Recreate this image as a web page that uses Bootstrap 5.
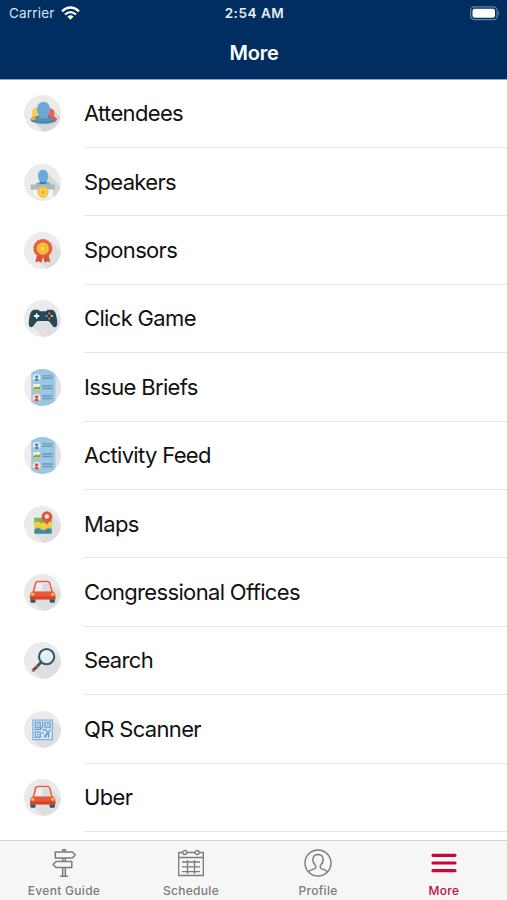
<!DOCTYPE html>
<html lang="en">
<head>
<meta charset="utf-8">
<meta name="viewport" content="width=device-width, initial-scale=1">
<title>More</title>
<link href="https://cdn.jsdelivr.net/npm/bootstrap@5.3.0/dist/css/bootstrap.min.css" rel="stylesheet">
<style>
body{font-family:Inter,"Liberation Sans",sans-serif;color:#111;background:#fff}
.app{height:900px;overflow:hidden}
.top{height:79px;background:#002e61;box-shadow:0 1px 0 #8fa5c0;z-index:1}
.status{height:27px;padding:0 7px 0 9px;font-size:13px;line-height:27px}
.status .carrier{font-size:13.5px;letter-spacing:.18px;color:#dce4ed}
.status .wifi{margin-left:6px}
.status .clock{font-size:13.5px;font-weight:600;letter-spacing:.55px;color:#e7edf4}
.title{font-size:20px;line-height:24px;font-weight:600;margin:14px 0 0;padding-left:1px;letter-spacing:-.2px}
.menu-list{padding-top:.6px}
.menu-row{height:68.4px;padding-left:24px;color:#111}
.menu-row svg{width:37px;height:37px;margin-right:23px;flex:none}
.menu-row .label{border-bottom:1px solid #e6e6e7;font-size:22px;letter-spacing:-.66px;padding-top:1px}
.tabs{height:60px;background:#f6f6f6;border-top:1px solid #d3d3d3;z-index:1}
.tab-item{color:#7b7b7b;font-size:12px;line-height:15px;font-weight:500;letter-spacing:.3px;padding:7px 0 0 1px}
.tab-item svg{width:30px;height:30px;margin-bottom:5px}
.tab-item.current{color:#c6093b;padding-left:0}
</style>
<script src="https://cdn.jsdelivr.net/npm/bootstrap@5.3.0/dist/js/bootstrap.bundle.min.js"></script>
</head>
<body>
<svg width="0" height="0" class="position-absolute" aria-hidden="true">
<defs>
<clipPath id="disc"><circle cx="18" cy="18" r="18"/></clipPath>
<linearGradient id="shade" x1="0" y1="0" x2="1" y2="1"><stop offset="0" stop-color="#ccc"/><stop offset="1" stop-color="#dedede"/></linearGradient>
</defs>
<symbol id="attendees" viewBox="0 0 36 36"><g clip-path="url(#disc)"><path fill="#ebebeb" d="M0 0h36v36H0z"/><path fill="url(#shade)" d="M29 15l8 8v14H20l-9-10z"/>
<path fill="#f5cf4d" d="M7.500 24c-1-2 .3-3 .5-5-1-4 1-6.500 4-6.500s4.500 2 4.500 5v7z"/><path fill="#e8644f" d="M22 24v-8c1-4 7.500-4 7.500 1 0 2-.5 3 .5 5l2 2z"/>
<ellipse cx="19" cy="24" rx="12.700" ry="4" fill="#4b86a8"/><path fill="#e4573d" d="M25 21.500l6.500.5.300 2-5 .5z"/><path fill="#eebc32" d="M6.700 23l4-1.500 2 2-5 1z"/>
<path fill="#6ca9d8" d="M14.500 23c.6-2 .3-3-.7-4.500-2.600-5.500-.5-12 5.200-12s7.800 6.500 5.200 12c-1 1.500-1.200 2.500-.6 4.500z"/><path fill="#5392bc" d="M10 24c4-2 14-2 19 0-4 2-15 2-19 0z"/></g></symbol>
<symbol id="speakers" viewBox="0 0 36 36"><g clip-path="url(#disc)"><path fill="#ebebeb" d="M0 0h36v36H0z"/><path fill="#d8d8d8" d="M23 9l14 14v14H28V22l-6-2z"/>
<path fill="#6caad9" d="M13.500 11.500c0-8 10-8 10 0 0 3-1 4-1.500 6 3 .6 4.500 1.500 4.500 3.500H11c0-2 1.500-2.900 4.500-3.500-.5-2-2-3-2-6z"/><path fill="#3d7199" d="M15.500 16.500q3 3 6 0v2q-3 2-6 0z"/><path fill="#b5b9bc" d="M6.500 20h23.500v5H6.500z"/><path fill="#f4f4f4" d="M9.500 25H28v7H9.500z"/><circle cx="18.500" cy="27.300" r="5.500" fill="#f4c43b"/><circle cx="18.500" cy="27.300" r="3.500" fill="#ffd75b"/><path fill="#e2a925" d="M18.500 24.800l.8 1.700 1.800.2-1.400 1.200.4 1.800-1.600-1-1.600 1 .4-1.800-1.400-1.200 1.800-.2z"/></g></symbol>
<symbol id="sponsors" viewBox="0 0 36 36"><g clip-path="url(#disc)"><path fill="#ebebeb" d="M0 0h36v36H0z"/><path fill="#dedede" d="M26 9l11 11v17H23l-9-9z"/>
<path fill="#d94e35" d="M13 21l-2 8.500 3.300-1 2.500 1.500 1.700-6 1.700 6 2.500-1.500 2.800 1-2-9z"/><circle cx="18.300" cy="16" r="8" fill="#ed6146"/><circle cx="18.300" cy="16" r="8.300" fill="none" stroke="#e45639" stroke-width="1.700" stroke-dasharray="2.900 .36"/><circle cx="18.300" cy="16" r="5.800" fill="#f5c53f"/><circle cx="18.300" cy="16" r="3.900" fill="#edb526"/><path fill="#f9d75a" d="M18.300 12.800l1 2.100 2.200.3-1.600 1.600.4 2.200-2-1.100-2 1.100.4-2.200-1.600-1.600 2.200-.3z"/></g></symbol>
<symbol id="game" viewBox="0 0 36 36"><g clip-path="url(#disc)"><path fill="#ebebeb" d="M0 0h36v36H0z"/><path fill="#e0e0e0" d="M28 11l9 9v17H20L8 25z"/>
<path fill="#264a5c" d="M10 9.500l4 0 1.500 1.500h6L23 9.500h4c3 0 4.200 3.500 5 9 .8 5 .4 8-2 8-2.700 0-4-5.500-6.500-6h-10C11 21 9.800 26.500 7 26.500c-2.400 0-2.800-3-2-8 .8-5.500 2-9 5-9z"/><circle cx="12.300" cy="15.500" r="3.600" fill="#18394c"/><circle cx="24.500" cy="15.500" r="3.600" fill="#18394c"/><path d="M12.300 12.800v5.400M9.600 15.500H15" stroke="#edf1f2" stroke-width="1.900"/><circle cx="24.500" cy="13" r="1.200" fill="#ec6c50"/><circle cx="27" cy="15.500" r="1.200" fill="#efc343"/><circle cx="24.500" cy="18" r="1.200" fill="#de6549"/><circle cx="22" cy="15.500" r="1.200" fill="#51a9bd"/></g></symbol>
<symbol id="briefs" viewBox="0 0 36 36"><g clip-path="url(#disc)"><path fill="#eee" d="M0 0h36v36H0z"/><path fill="#e1e1e1" d="M30 2h6v22l-6 6z"/><path fill="#9cc7e4" d="M7 0h23.500v36H7z"/><path d="M17.500 6.700h10.300M17.500 9h10.300M17.500 16.500h10.300M17.500 19h10.300M17.500 26.300h10.300M17.500 28.700h10.300" stroke="#6c9bba" stroke-width="1.300"/>
<circle cx="12.300" cy="8.300" r="3.800" fill="#dcebf3"/><circle cx="12.300" cy="7.600" r="1.600" fill="#4d8ab8"/><path fill="#4d8ab8" d="M9.700 10.800q2.600-3 5.200 0-2.600 2.500-5.200 0z"/><path fill="#eff1d9" d="M9 14.500h6.700V21H9z"/><path fill="#6fa45b" d="M9 19l2.500-2 2 1 2.200-1.200V21H9z"/><path fill="#edc44b" d="M9 19.500h6.700V21H9z"/><circle cx="12.300" cy="28" r="3.800" fill="#efe7e2"/><circle cx="12.300" cy="27.200" r="1.700" fill="#d35340"/><path fill="#d35340" d="M9.700 30.500q2.600-3 5.200 0-2.600 2.500-5.200 0z"/></g></symbol>
<symbol id="maps" viewBox="0 0 36 36"><g clip-path="url(#disc)"><path fill="#ebebeb" d="M0 0h36v36H0z"/><path fill="#dedede" d="M27 9l10 10v18H20L10 27z"/>
<path fill="#7eb34d" d="M10 11.500h17v7H10z"/><path fill="#f3ce49" d="M10 16q3-2 5.500 0t5.500-.5 6 .5v8H10z"/><path fill="#368bad" d="M10 23q2.700-3.500 6-1.500 3 2 5 .5 3-2 6 0v5H10z"/><path fill="#eac541" d="M10 20.500q3-3 6.500-.5 3 2 5 .4 3-2 5.500.2v2q-3-2-5.500 0t-5.500-.2q-3-2.200-6 .7z"/><path fill="#df5643" d="M22.300 19c-.7-3.500-5.300-4.800-5.300-8.500a5.300 5.300 0 0 1 10.600 0c0 3.700-4.600 5-5.300 8.500z"/><circle cx="22.300" cy="10.300" r="2.200" fill="#f0e9e5"/></g></symbol>
<symbol id="car" viewBox="0 0 36 36"><g clip-path="url(#disc)"><path fill="#e9e9e9" d="M0 0h36v36H0z"/><path fill="#dedede" d="M28 11l9 9v17H21L8 27z"/>
<rect x="6.200" y="22.500" width="5" height="5.500" rx="1.200" fill="#31566a"/><rect x="25" y="22.500" width="5" height="5.500" rx="1.200" fill="#31566a"/><path fill="#eceded" stroke="#ea5b3d" stroke-width="1.500" stroke-linejoin="round" d="M9 18l2.300-9q.4-1.700 2.200-1.700h9.300q1.800 0 2.200 1.700l2.300 9z"/><path fill="#d9dddd" d="M18 8h5q1 0 1.300 1.500l1.800 7H18z"/><path fill="#e9583b" d="M8 17h20.500l2 2.500v4.300q0 .9-1 .9H7q-1 0-1-.9v-4.300z"/><path fill="#cd4430" d="M6 22h24.500v2.500H6z"/><circle cx="8.500" cy="19.700" r="1.500" fill="#f7cb54"/><circle cx="28" cy="19.700" r="1.500" fill="#f7cb54"/></g></symbol>
<symbol id="search" viewBox="0 0 36 36"><g clip-path="url(#disc)"><path fill="#ebebeb" d="M0 0h36v36H0z"/><path fill="#dfdfdf" d="M28 9l9 9v19H18l-9-9 12-9z"/>
<path stroke="#315568" stroke-width="2.700" stroke-linecap="round" d="M9 27.500l8-8"/><path stroke="#df543f" stroke-width="2.900" d="M11.800 24.700l1.500-1.500M8.300 28.200l1.200-1.200"/><circle cx="22" cy="14.300" r="7.400" fill="#e4edf0" stroke="#31596d" stroke-width="2"/><path fill="none" stroke="#fff" stroke-width="1.200" d="M17.800 13.800q.5-3.500 4-4"/></g></symbol>
<symbol id="qr" viewBox="0 0 36 36"><g clip-path="url(#disc)"><path fill="#ebebeb" d="M0 0h36v36H0z"/><path fill="#dedede" d="M28 9l9 9v19H18l-9-9z"/>
<path fill="#dceaf5" stroke="#7fb1dc" stroke-width="1.200" d="M8.600 8.800h19v19h-19z"/><g fill="none" stroke="#6fa5d4" stroke-width="1.400"><path d="M11 11.200h4.800V16H11zM20.500 11.200h4.800V16h-4.800zM11 20.700h4.800v4.800H11zM18.200 10v5l-2.500 3H10M18 18.300l3 0 2 2.500M26 18.300l-7 7M18.300 20.500v2M21.500 26v-2.500l2.500-2V26"/></g><path fill="#5f98ca" d="M12.700 12.900h1.500v1.500h-1.500zM22.200 12.900h1.500v1.500h-1.500zM12.700 22.400h1.500v1.500h-1.500z"/></g></symbol>
</svg>
<div class="app d-flex flex-column">
<header class="top text-white position-relative flex-shrink-0">
<div class="status row g-0 align-items-center">
<div class="col d-flex align-items-center"><span class="carrier">Carrier</span><svg class="wifi" width="19" height="15" viewBox="0 0 19 15"><g fill="none" stroke="#fff" stroke-width="2.300"><path d="M1 5.300q8.500-7.600 17 0"/><path d="M4 8.500q5.500-4.800 11 0"/></g><path fill="#fff" d="M6.400 10.600q3.100-2.600 6.200 0L9.500 13.800z"/></svg></div>
<div class="col-auto clock">2:54 AM</div>
<div class="col d-flex justify-content-end"><svg width="30" height="15" viewBox="0 0 30 15"><rect x=".6" y=".8" width="26.500" height="12.800" rx="3.700" fill="none" stroke="#6781a2" stroke-width="1.200"/><rect x="2.500" y="2.700" width="22.500" height="9" rx="2" fill="#fff"/><path fill="#718baa" d="M28.300 5q2 2.200 0 4.400z"/></svg></div>
</div>
<h1 class="title text-center">More</h1>
</header>
<main class="flex-grow-1 overflow-hidden">
<nav class="menu-list d-flex flex-column">
<a class="menu-row d-flex align-items-center text-decoration-none flex-shrink-0" href="#"><svg><use href="#attendees"/></svg><span class="label flex-grow-1 h-100 d-flex align-items-center">Attendees</span></a>
<a class="menu-row d-flex align-items-center text-decoration-none flex-shrink-0" href="#"><svg><use href="#speakers"/></svg><span class="label flex-grow-1 h-100 d-flex align-items-center">Speakers</span></a>
<a class="menu-row d-flex align-items-center text-decoration-none flex-shrink-0" href="#"><svg><use href="#sponsors"/></svg><span class="label flex-grow-1 h-100 d-flex align-items-center">Sponsors</span></a>
<a class="menu-row d-flex align-items-center text-decoration-none flex-shrink-0" href="#"><svg><use href="#game"/></svg><span class="label flex-grow-1 h-100 d-flex align-items-center">Click Game</span></a>
<a class="menu-row d-flex align-items-center text-decoration-none flex-shrink-0" href="#"><svg><use href="#briefs"/></svg><span class="label flex-grow-1 h-100 d-flex align-items-center">Issue Briefs</span></a>
<a class="menu-row d-flex align-items-center text-decoration-none flex-shrink-0" href="#"><svg><use href="#briefs"/></svg><span class="label flex-grow-1 h-100 d-flex align-items-center">Activity Feed</span></a>
<a class="menu-row d-flex align-items-center text-decoration-none flex-shrink-0" href="#"><svg><use href="#maps"/></svg><span class="label flex-grow-1 h-100 d-flex align-items-center">Maps</span></a>
<a class="menu-row d-flex align-items-center text-decoration-none flex-shrink-0" href="#"><svg><use href="#car"/></svg><span class="label flex-grow-1 h-100 d-flex align-items-center">Congressional Offices</span></a>
<a class="menu-row d-flex align-items-center text-decoration-none flex-shrink-0" href="#"><svg><use href="#search"/></svg><span class="label flex-grow-1 h-100 d-flex align-items-center">Search</span></a>
<a class="menu-row d-flex align-items-center text-decoration-none flex-shrink-0" href="#"><svg><use href="#qr"/></svg><span class="label flex-grow-1 h-100 d-flex align-items-center">QR Scanner</span></a>
<a class="menu-row d-flex align-items-center text-decoration-none flex-shrink-0" href="#"><svg><use href="#car"/></svg><span class="label flex-grow-1 h-100 d-flex align-items-center">Uber</span></a>
</nav>
</main>
<footer class="tabs row g-0 flex-shrink-0">
<div class="col tab-item d-flex flex-column align-items-center"><svg viewBox="0 0 30 30" fill="none" stroke="currentColor" stroke-width="1.500" stroke-linejoin="round"><path d="M6.300 4h17l3 3-3 3h-17zM22.800 13.500H7l-3 3 3 3h15.800zM13.700 4V1.700h2.600V4M13.700 10v3.500M16.300 10v3.500M13.700 19.500v8.800M16.300 19.500v8.800M11 28.300h8"/></svg>Event Guide</div>
<div class="col tab-item d-flex flex-column align-items-center"><svg viewBox="0 0 30 30" fill="none" stroke="currentColor" stroke-width="1.300"><path d="M6.800 4.500H2.700v23h24.600v-23h-4.100M10.800 4.500h8.400M2.700 9.500h24.600M6 14h18M6 18.800h18M6 23.600h18M11.500 12v14M18.500 12v14"/><circle cx="8.800" cy="4.500" r="2"/><circle cx="21.200" cy="4.500" r="2"/></svg>Schedule</div>
<div class="col tab-item d-flex flex-column align-items-center"><svg viewBox="0 0 30 30" fill="none" stroke="currentColor" stroke-width="1.400"><circle cx="15" cy="15" r="13"/><path d="M5.500 24c1.500-2.300 5-2.500 6.500-3.500 1.200-.9 1-2.700 0-3.800-4-4.700-2-10.200 3-10.200s7 5.500 3 10.200c-1 1.100-1.200 2.900 0 3.800 1.500 1 5 1.200 6.500 3.500"/></svg>Profile</div>
<div class="col tab-item current d-flex flex-column align-items-center"><svg viewBox="0 0 30 30" fill="none" stroke="currentColor" stroke-width="3.200" stroke-linecap="round"><path d="M4 7.300h22M4 15h22M4 22.700h22"/></svg>More</div>
</footer>
</div>
</body>
</html>
